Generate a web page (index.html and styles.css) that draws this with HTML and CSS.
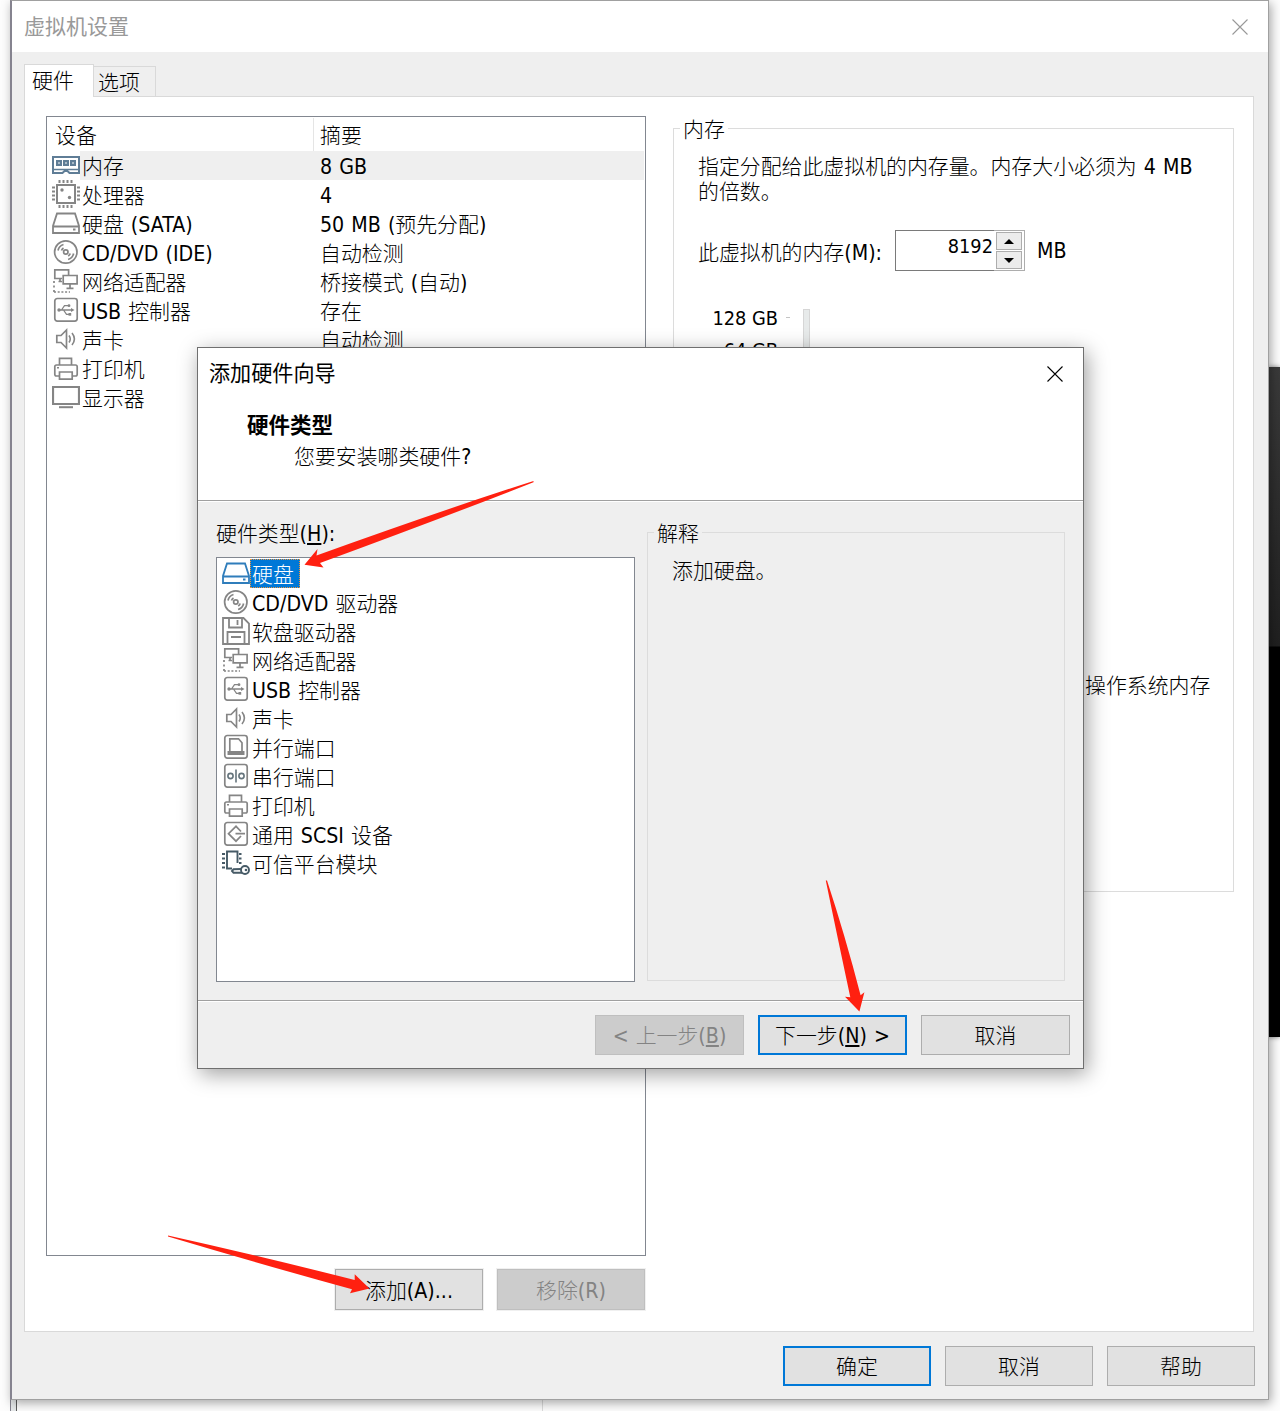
FILE: index.html
```
<!DOCTYPE html>
<html lang="zh-CN">
<head>
  <meta charset="UTF-8">
  <title>虚拟机设置</title>
  <link rel="stylesheet" href="styles.css">
</head>
<body>
  <svg class="sprite" width="0" height="0">
    <symbol id="i-memory" viewBox="0 0 28 28">
      <path d="M1 6h26v16h-9.500l-2-2h-3l-2 2H1z" fill="#fff" stroke="#5f7d96" stroke-width="2"/>
      <path d="M1 18.500h26" stroke="#5f7d96" stroke-width="1.500"/>
      <path d="M5 10h4v4H5zM12 10h4v4h-4zM19 10h4v4h-4z" fill="#a9bac7" stroke="#5f7d96" stroke-width="2"/>
    </symbol>
    <symbol id="i-cpu" viewBox="0 0 28 28">
      <path d="M5 5h18v18H5z" fill="#fff" stroke="#858585" stroke-width="2"/>
      <path d="M7.500 0v3M11.500 0v3M15.500 0v3M19.500 0v3M7.500 25v3M11.500 25v3M15.500 25v3M19.500 25v3M0 7.500h3M0 11.500h3M0 15.500h3M0 19.500h3M25 7.500h3M25 11.500h3M25 15.500h3M25 19.500h3" stroke="#858585" stroke-width="2"/>
      <circle cx="10" cy="10" r="1.700" fill="#858585"/><circle cx="17.500" cy="17.500" r="1.700" fill="#858585"/>
    </symbol>
    <symbol id="i-disk" viewBox="0 0 28 28">
      <path d="M5 4.500h18l4 12.500v7H1v-7zM1 17.500h26" fill="#fff" stroke="currentColor" stroke-width="1.800"/>
      <path d="M21 20.500h2.500" stroke="currentColor" stroke-width="2"/>
    </symbol>
    <symbol id="i-disc" viewBox="0 0 28 28">
      <g fill="none" stroke="#858585" stroke-width="1.700">
        <circle cx="13.800" cy="14" r="11.200"/><circle cx="13.800" cy="14" r="2.200"/>
        <path d="M6 12.500a8 8 0 0 1 5.500-6M9.500 12.500a5 5 0 0 1 2-2.500M21.600 15.500a8 8 0 0 1-5.500 6M18.200 15.500a5 5 0 0 1-2 2.500"/>
      </g>
    </symbol>
    <symbol id="i-net" viewBox="0 0 28 28">
      <g fill="none" stroke="#858585" stroke-width="1.700">
        <path d="M10 11.500H2.800v-8.600h13.800V8M11.200 8.500h13.900v8.400H11.200zM6.500 14.500h3.500M8 11.500v3M18 17v3.500M14.500 21.300h7"/>
        <path d="M2 14v12" stroke-dasharray="2 2.500"/><path d="M2 25h16" stroke-dasharray="2 1.700"/>
      </g>
    </symbol>
    <symbol id="i-usb" viewBox="0 0 28 28">
      <rect x="2.800" y="2.500" width="22.400" height="22.600" rx="2.500" fill="none" stroke="#858585" stroke-width="1.700"/>
      <g fill="none" stroke="#858585" stroke-width="1.300"><path d="M7 14h14M9.500 14l3-4.300h4M11.500 14l3 4.300h3"/></g>
      <path d="M22.500 14l-3.500-2v4z" fill="#858585"/><circle cx="7" cy="14" r="1.700" fill="#858585"/><circle cx="17" cy="9.700" r="1.400" fill="#858585"/><path d="M16.500 17h2.700v2.700h-2.700z" fill="#858585"/>
    </symbol>
    <symbol id="i-sound" viewBox="0 0 28 28">
      <path d="M4.800 10.500h4.200l5.500-5.500v18L9 17.500H4.800z" fill="none" stroke="#858585" stroke-width="1.700"/>
      <path d="M17 10.500q2.500 3.500 0 7M20 8q4.800 6 0 12" fill="none" stroke="#858585" stroke-width="1.600"/>
    </symbol>
    <symbol id="i-printer" viewBox="0 0 28 28">
      <g fill="none" stroke="#858585" stroke-width="1.700">
        <path d="M7.500 11V4.300h12V11M7 22H4.500Q2.800 22 2.800 20.300V12.700Q2.800 11 4.500 11h19q1.700 0 1.700 1.700v7.600q0 1.700-1.700 1.700H21"/>
        <path d="M7.500 18h12.700v7.200H7.500z"/>
      </g>
      <path d="M5 13.800h2" stroke="#858585" stroke-width="1.400"/>
    </symbol>
    <symbol id="i-display" viewBox="0 0 28 28">
      <path d="M1 4h26v17H1z" fill="#fff" stroke="#858585" stroke-width="2.200"/>
      <path d="M7 24.200h14" stroke="#858585" stroke-width="2"/>
    </symbol>
    <symbol id="i-floppy" viewBox="0 0 28 28">
      <g fill="none" stroke="#858585" stroke-width="1.800">
        <path d="M1 1h20.500L27 6.500V27H1zM7 1v9.500h13V1M15.500 3v5M5.500 27V15h17v12M9 20h10"/>
      </g>
    </symbol>
    <symbol id="i-parallel" viewBox="0 0 28 28">
      <rect x="2.800" y="2.500" width="22.400" height="22.600" rx="2.500" fill="none" stroke="#858585" stroke-width="1.700"/>
      <path d="M7.800 18V5.800h8.700l3.500 4V18" fill="none" stroke="#858585" stroke-width="1.700"/>
      <path d="M5.500 18h17v4h-17z" fill="#858585"/>
    </symbol>
    <symbol id="i-serial" viewBox="0 0 28 28">
      <rect x="2.800" y="2.500" width="22.400" height="22.600" rx="2.500" fill="none" stroke="#858585" stroke-width="1.700"/>
      <g fill="none" stroke="#65747c" stroke-width="1.600"><circle cx="8.500" cy="14" r="2.600"/><circle cx="19.500" cy="14" r="2.600"/><path d="M14 7.500v13"/></g>
    </symbol>
    <symbol id="i-scsi" viewBox="0 0 28 28">
      <rect x="2.800" y="2.500" width="22.400" height="22.600" rx="2.500" fill="none" stroke="#858585" stroke-width="1.700"/>
      <path d="M19 11.500L14 6.300 6.500 13.700l7.500 7.500 5-5.200M13.500 13.700H23" fill="none" stroke="#858585" stroke-width="1.700"/>
    </symbol>
    <symbol id="i-tpm" viewBox="0 0 28 28">
      <g fill="none" stroke="#465a66" stroke-width="1.900">
        <path d="M10 19.500H5V2.500h10.500V14M0 5h3M0 9.500h3M0 14h3M0 18.500h3M17 5h2.500M17 9.500h2.500M17 14h2.500"/>
        <circle cx="23" cy="21" r="4"/><path d="M19.500 20l-8 .3-1.500 1.700 1.500 1.700h8.500"/>
      </g>
      <circle cx="24" cy="21" r="1.300" fill="#465a66"/>
    </symbol>
  </svg>

  <div class="behind-strip"></div>
  <div class="behind-line"></div>
  <div class="behind-dark"></div>

  <div class="window">
    <div class="titlebar">
      <span>虚拟机设置</span>
      <svg class="close" viewBox="0 0 16 16"><path d="M.5.500l15 15M15.500.500l-15 15"/></svg>
    </div>

    <div class="window-body">
      <div class="tabs">
        <div class="tab active">硬件</div>
        <div class="tab">选项</div>
      </div>
      <div class="panel">
        <div class="devices">
          <div class="list device-list">
            <div class="list-head"><span class="col-name">设备</span><span class="col-sum">摘要</span></div>
            <div class="row current"><svg class="icon"><use href="#i-memory"/></svg><span class="name">内存</span><span class="sum"><span class="en">8 GB</span></span></div>
            <div class="row"><svg class="icon"><use href="#i-cpu"/></svg><span class="name">处理器</span><span class="sum"><span class="en">4</span></span></div>
            <div class="row"><svg class="icon"><use href="#i-disk"/></svg><span class="name">硬盘<span class="en"> (SATA)</span></span><span class="sum"><span class="en">50 MB (</span>预先分配<span class="en">)</span></span></div>
            <div class="row"><svg class="icon"><use href="#i-disc"/></svg><span class="name"><span class="en">CD/DVD (IDE)</span></span><span class="sum">自动检测</span></div>
            <div class="row"><svg class="icon"><use href="#i-net"/></svg><span class="name">网络适配器</span><span class="sum">桥接模式<span class="en"> (</span>自动<span class="en">)</span></span></div>
            <div class="row"><svg class="icon"><use href="#i-usb"/></svg><span class="name"><span class="en">USB </span>控制器</span><span class="sum">存在</span></div>
            <div class="row"><svg class="icon"><use href="#i-sound"/></svg><span class="name">声卡</span><span class="sum">自动检测</span></div>
            <div class="row"><svg class="icon"><use href="#i-printer"/></svg><span class="name">打印机</span></div>
            <div class="row"><svg class="icon"><use href="#i-display"/></svg><span class="name">显示器</span></div>
          </div>
          <div class="device-actions">
            <div class="btn ringed">添加<span class="en">(A)...</span></div>
            <div class="btn ringed disabled">移除<span class="en">(R)</span></div>
          </div>
        </div>

        <fieldset class="group memory">
          <legend>内存</legend>
          <p class="memory-text">指定分配给此虚拟机的内存量。内存大小必须为<span class="en"> 4 MB</span><br>的倍数。</p>
          <div class="memory-input">
            <span class="memory-label">此虚拟机的内存<span class="en">(M):</span></span>
            <div class="spinner">
              <span class="spinner-value en num">8192</span>
              <div class="spinner-buttons">
                <div><svg viewBox="0 0 10 5"><path d="M0 5l5-5 5 5z"/></svg></div>
                <div><svg viewBox="0 0 10 5"><path d="M0 0l5 5 5-5z"/></svg></div>
              </div>
            </div>
            <span class="en">MB</span>
          </div>
          <div class="scale">
            <div class="scale-labels"><div class="en num">128 GB</div><div class="en num">64 GB</div></div>
            <div class="scale-tick"></div>
            <div class="scale-track"></div>
          </div>
          <div class="scale-note">操作系统内存</div>
        </fieldset>
      </div>
    </div>

    <div class="footer">
      <div class="btn default">确定</div>
      <div class="btn">取消</div>
      <div class="btn">帮助</div>
    </div>
  </div>

  <div class="dialog">
    <div class="dialog-head">
      <div class="dialog-title">
        <span>添加硬件向导</span>
        <svg class="close" viewBox="0 0 16 16"><path d="M.5.500l15 15M15.500.500l-15 15"/></svg>
      </div>
      <div class="step-title">硬件类型</div>
      <div class="step-sub">您要安装哪类硬件<span class="en">?</span></div>
    </div>
    <div class="dialog-body">
      <div class="types">
        <div class="types-label">硬件类型<span class="en">(<u>H</u>):</span></div>
        <div class="list type-list">
          <div class="row selected"><svg class="icon"><use href="#i-disk"/></svg><span class="name">硬盘</span></div>
          <div class="row"><svg class="icon"><use href="#i-disc"/></svg><span class="name"><span class="en">CD/DVD </span>驱动器</span></div>
          <div class="row"><svg class="icon"><use href="#i-floppy"/></svg><span class="name">软盘驱动器</span></div>
          <div class="row"><svg class="icon"><use href="#i-net"/></svg><span class="name">网络适配器</span></div>
          <div class="row"><svg class="icon"><use href="#i-usb"/></svg><span class="name"><span class="en">USB </span>控制器</span></div>
          <div class="row"><svg class="icon"><use href="#i-sound"/></svg><span class="name">声卡</span></div>
          <div class="row"><svg class="icon"><use href="#i-parallel"/></svg><span class="name">并行端口</span></div>
          <div class="row"><svg class="icon"><use href="#i-serial"/></svg><span class="name">串行端口</span></div>
          <div class="row"><svg class="icon"><use href="#i-printer"/></svg><span class="name">打印机</span></div>
          <div class="row"><svg class="icon"><use href="#i-scsi"/></svg><span class="name">通用<span class="en"> SCSI </span>设备</span></div>
          <div class="row"><svg class="icon"><use href="#i-tpm"/></svg><span class="name">可信平台模块</span></div>
        </div>
      </div>
      <fieldset class="group explain">
        <legend>解释</legend>
        <p>添加硬盘。</p>
      </fieldset>
    </div>
    <div class="dialog-footer">
      <div class="btn disabled"><span class="en">&lt; </span>上一步<span class="en">(<u>B</u>)</span></div>
      <div class="btn default">下一步<span class="en">(<u>N</u>) &gt;</span></div>
      <div class="btn">取消</div>
    </div>
  </div>

  <!-- red pointer arrows -->
  <svg class="arrows" width="1280" height="1411" viewBox="0 0 1280 1411">
    <path d="M533.500 481Q440 511 316.500 555.500l1-6.500-13 15.700 19 2.800-3.500-4.500Q440 519 533.500 482.200z"/>
    <path d="M825.800 880.500Q837 935 850.300 997.300l-5.300-.5 14.400 14.700 5-19.200-3.800 3Q845 935 827 880.500z"/>
    <path d="M168 1236.500Q260 1264 352 1289.300l-2 4 19.500-4.700-14.800-14.300v5.700Q260 1256 168 1235.500z"/>
  </svg>
</body>
</html>
```
FILE: styles.css
```
* { box-sizing: border-box; }
body {
  margin: 0;
  position: relative;
  width: 1280px;
  height: 1411px;
  overflow: hidden;
  background: #fdfdfd;
  color: #000;
  font: 300 20.9px/26px "Noto Sans CJK SC", sans-serif;
  white-space: nowrap;
}
.en { font-family: "DejaVu Sans Condensed", "DejaVu Sans", sans-serif; font-stretch: condensed; font-weight: 400; font-size: 21.2px; line-height: 1; word-spacing: 1px; white-space: pre; }
.en.num { font-size: 19.8px; word-spacing: 0; }
p { margin: 0; }
.sprite { position: absolute; }

/* other windows showing behind */
.behind-strip { position: absolute; left: 10px; top: 1399px; width: 7px; height: 12px; background: #e6e9ea; border-left: 1px solid #85838f; border-right: 1px solid #5c5c5c; }
.behind-line { position: absolute; left: 542px; top: 1399px; width: 1px; height: 12px; background: #dcdcdc; }
.behind-dark { position: absolute; left: 1268px; top: 367px; width: 12px; height: 670px; background: linear-gradient(#3a3a3a, #202020 279px, #000 280px); box-shadow: 0 0 5px rgba(0,0,0,.5); }

.window {
  position: relative;
  margin-left: 10px;
  width: 1259px;
  height: 1400px;
  background: #efefef;
  border: 1px solid #a0a0a0;
  border-left: 2px solid #85838f;
  box-shadow: 2px 3px 10px rgba(0,0,0,.35);
}
.titlebar { height: 51px; padding: 0 20.500px 0 12px; background: #fff; color: #999; display: flex; align-items: center; justify-content: space-between; font-size: 21px; font-weight: 400; }
.titlebar span, .dialog-title span { padding-bottom: 3px; }
.close { width: 16px; height: 16px; fill: none; stroke: currentColor; stroke-width: 1.1; }

.window-body { padding: 12px 14px 0 12px; }
.tabs { display: flex; align-items: flex-end; height: 32px; }
.tab { height: 30px; width: 62px; padding: 1px 0 0 4px; border: 1px solid #d9d9d9; border-width: 1px 1px 0 0; }
.tab.active { height: 33px; width: 70px; margin-bottom: -1px; padding: 1px 0 0 7px; background: #fff; border-width: 1px 1px 0 1px; z-index: 1; }
.panel { display: flex; align-items: flex-start; height: 1236px; padding: 19px 0 0 21px; background: #fff; border: 1px solid #d9d9d9; }

.list { background: #fff; border: 1px solid #828790; }
.devices { width: 600px; }
.device-list { height: 1140px; }
.list-head { display: flex; height: 34px; line-height: 33px; padding-top: 1px; }
.col-name { width: 267px; padding-left: 8px; border-right: 1px solid #e5e5e5; }
.col-sum { padding-left: 6px; }
.row { display: flex; height: 29px; line-height: 29px; padding-left: 5px; }
.icon { width: 28px; height: 28px; color: #858585; flex: none; }
.name { width: 240px; padding-left: 2px; }
.current .name, .current .sum { background: #efefef; }
.sum { flex: 1; margin-right: 1px; }
.device-actions { display: flex; justify-content: flex-end; gap: 14px; padding: 13px 1px 0 0; }

.btn { width: 148px; height: 40px; line-height: 36px; text-align: center; background: #e1e1e1; border: 1px solid #adadad; }
.btn.ringed { height: 41px; line-height: 38px; box-shadow: 0 0 0 1px #f0f0f0; }
.btn.default { border: 2px solid #0078d7; line-height: 34px; }
.btn.disabled { background: #ccc; border-color: #bfbfbf; color: #838383; }
.footer { display: flex; justify-content: flex-end; gap: 14px; padding: 14px 13px 0 0; }

.group { margin: 0; padding: 0; min-width: 0; border: 1px solid #dcdcdc; }
.group legend { margin-left: 6px; padding: 0 3px; }
.memory { width: 561px; height: 777px; margin: -1px 0 0 27px; }
.memory-text { padding: 12px 0 0 24px; line-height: 25px; }
.memory-input { display: flex; align-items: center; margin-top: 27px; padding-left: 24px; }
.memory-label { width: 197px; }
.spinner { display: flex; width: 130px; height: 41px; margin-right: 12px; background: #fff; border: 1px solid #7a7a7a; }
.spinner-value { flex: 1; text-align: right; padding: 6px 2px 0 0; }
.spinner-buttons { display: flex; flex-direction: column; gap: 1px; width: 31px; margin: -1px; padding: 1px 2px; border: 1px solid #adadad; border-left: 0; }
.spinner-buttons div { flex: 1; display: flex; align-items: center; justify-content: center; background: #ececec; border: 1px solid #adadad; }
.spinner-buttons svg { width: 10px; height: 5px; }
.scale { display: flex; height: 338px; margin-top: 38px; }
.scale-labels { width: 104px; text-align: right; margin-top: -6px; }
.scale-labels .en { line-height: 32px; }
.scale-tick { width: 4px; height: 1px; margin: 8px 13px 0 8px; background: #c4c4c4; }
.scale-track { width: 7px; background: #e7eaea; border: 1px solid #d6d6d6; }
.scale-note { margin: 24px 0 0 411px; }

.dialog {
  position: absolute;
  left: 197px;
  top: 347px;
  width: 887px;
  height: 722px;
  background: #efefef;
  border: 1px solid #6f6f6f;
  box-shadow: 3px 5px 20px rgba(0,0,0,.38);
}
.dialog-head { height: 153px; background: #fff; border-bottom: 1px solid #a0a0a0; }
.dialog-title { display: flex; align-items: center; justify-content: space-between; height: 51px; padding: 0 20.500px 0 11px; font-size: 21.1px; font-weight: 400; }
.step-title { margin: 12px 0 0 49px; font-weight: 700; font-size: 21.5px; }
.step-sub { margin: 5px 0 0 96px; }
.dialog-body { display: flex; height: 500px; padding: 20px 0 0 18px; border-top: 1px solid #fff; border-bottom: 1px solid #a0a0a0; }
.types { width: 419px; }
.types-label { height: 35px; line-height: 21px; }
.type-list { height: 425px; padding-top: 1px; }
.type-list .name { width: auto; }
.selected .icon { color: #2f7dbb; }
.selected .name { height: 29px; padding-right: 6px; color: #fff; background: #0078d7; outline: 1px dotted #f0953c; outline-offset: -1px; }
.explain { width: 418px; height: 462px; margin: -3px 0 0 12px; }
.explain p { padding: 11px 0 0 24px; }
.dialog-footer { display: flex; justify-content: flex-end; gap: 14px; padding: 13px 13px 0 0; border-top: 1px solid #fff; }
.dialog-footer .btn { width: 149px; }

.arrows { position: absolute; left: 0; top: 0; fill: #ff2010; }
```
